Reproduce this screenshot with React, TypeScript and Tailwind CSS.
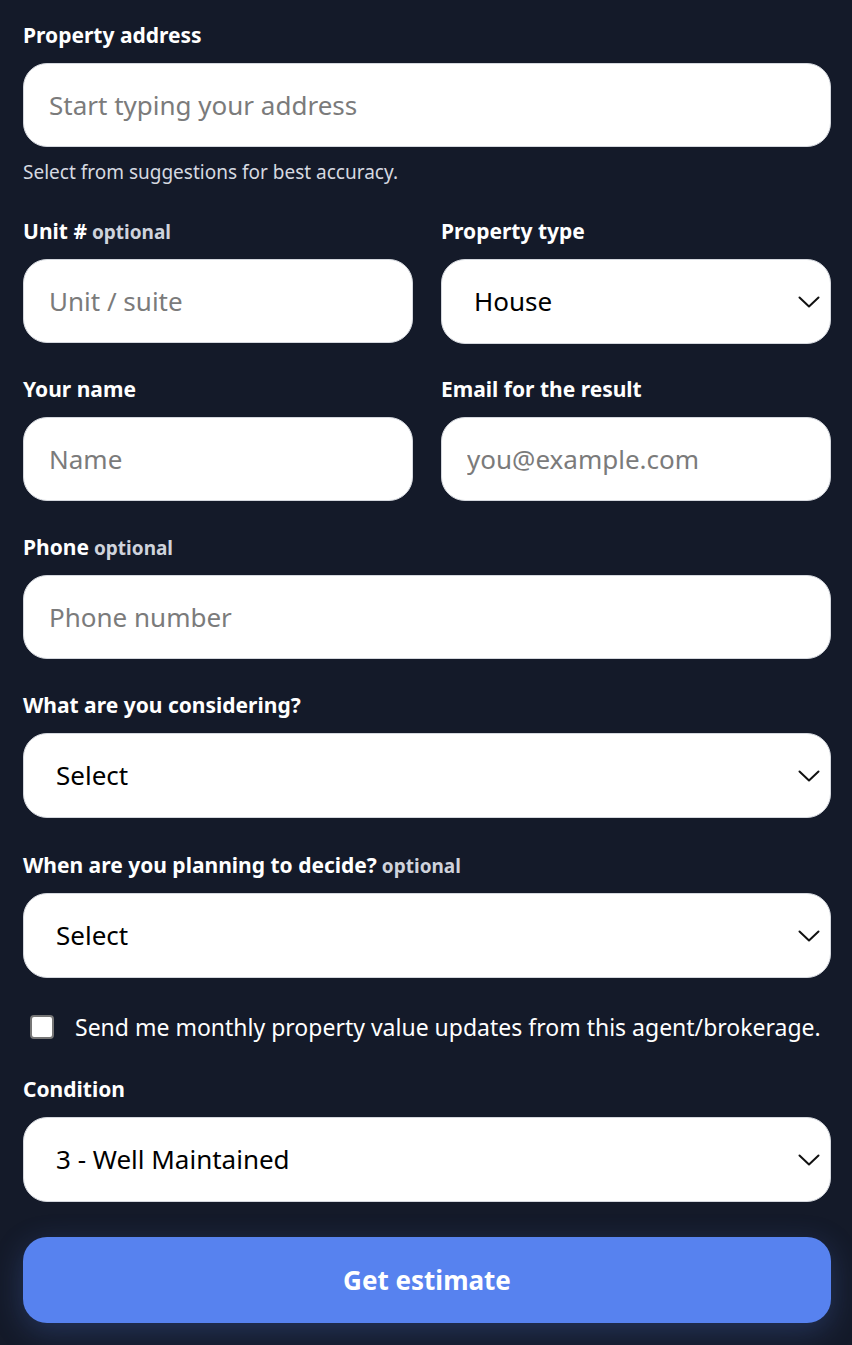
import React from "react";

const font = { fontFamily: '"Noto Sans", "Open Sans", Arial, sans-serif' };

function Label({ text, optional }: { text: string; optional?: boolean }) {
  return (
    <div className="text-[21px] font-bold leading-none text-white">
      {text}
      {optional && <span className="text-[19px] text-[#cfd3dc]"> optional</span>}
    </div>
  );
}

function Input({ placeholder }: { placeholder: string }) {
  return (
    <input
      placeholder={placeholder}
      className="h-[84px] w-full rounded-[24px] border border-[#d4d7dd] bg-white px-[25px] text-[26px] text-black outline-none placeholder:text-[#7b7b7b]"
    />
  );
}

function Chevron() {
  return (
    <svg width="22" height="12" viewBox="0 0 22 12" className="absolute right-[10px] top-1/2 -translate-y-1/2" fill="none">
      <path d="M1.5 1.5 L11 10.5 L20.5 1.5" stroke="#111" strokeWidth="2" strokeLinecap="round" strokeLinejoin="round" />
    </svg>
  );
}

function Select({ value }: { value: string }) {
  return (
    <div className="relative flex h-[85px] w-full items-center rounded-[24px] border border-[#d4d7dd] bg-white pl-[32px] text-[26px] text-black">
      {value}
      <Chevron />
    </div>
  );
}

function Field({ children, className = "" }: { children: React.ReactNode; className?: string }) {
  return <div className={`flex flex-col gap-[17px] ${className}`}>{children}</div>;
}

export default function App() {
  return (
    <div style={font} className="min-h-[1345px] w-[852px] bg-[#141a29] pl-[23px] pr-[21px] pt-[25px]">
      <Field>
        <Label text="Property address" />
        <Input placeholder="Start typing your address" />
      </Field>
      <div className="mt-[16px] text-[19px] leading-none text-[#d6d9e0]">Select from suggestions for best accuracy.</div>

      <div className="mt-[39px] grid grid-cols-2 gap-x-[28px] gap-y-[35px]">
        <Field>
          <Label text="Unit #" optional />
          <Input placeholder="Unit / suite" />
        </Field>
        <Field>
          <Label text="Property type" />
          <Select value="House" />
        </Field>
        <Field>
          <Label text="Your name" />
          <Input placeholder="Name" />
        </Field>
        <Field>
          <Label text="Email for the result" />
          <Input placeholder="you@example.com" />
        </Field>
      </div>

      <Field className="mt-[36px]">
        <Label text="Phone" optional />
        <Input placeholder="Phone number" />
      </Field>

      <Field className="mt-[36px]">
        <Label text="What are you considering?" />
        <Select value="Select" />
      </Field>

      <Field className="mt-[37px]">
        <Label text="When are you planning to decide?" optional />
        <Select value="Select" />
      </Field>

      <label className="mt-[37px] flex items-center gap-[21px] pl-[7px]">
        <span className="h-[24px] w-[24px] shrink-0 rounded-[4px] border-2 border-[#767676] bg-white" />
        <span className="text-[23px] leading-none text-white">Send me monthly property value updates from this agent/brokerage.</span>
      </label>

      <Field className="mt-[40px]">
        <Label text="Condition" />
        <Select value="3 - Well Maintained" />
      </Field>

      <button className="mt-[35px] h-[86px] w-full rounded-[24px] bg-[#5782ef] text-[26px] font-bold text-white shadow-[0_8px_30px_rgba(87,130,239,0.25)]">
        Get estimate
      </button>
    </div>
  );
}
